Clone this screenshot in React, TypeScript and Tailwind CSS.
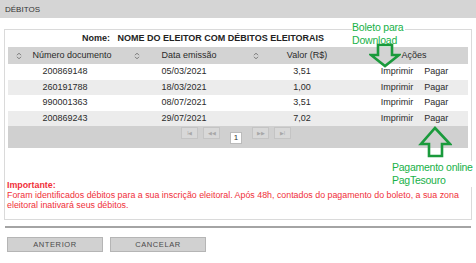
import React from 'react';

const rows = [
  { doc: '200869148', date: '05/03/2021', value: '3,51' },
  { doc: '260191788', date: '18/03/2021', value: '1,00' },
  { doc: '990001363', date: '08/07/2021', value: '3,51' },
  { doc: '200869243', date: '29/07/2021', value: '7,02' },
];

const cols = 'grid grid-cols-[120px_120px_117px_1fr]';

const SortIcon = () => (
  <svg width="6" height="8" viewBox="0 0 6 8" className="shrink-0">
    <path d="M1 3.2 L3 1.2 L5 3.2 M1 4.8 L3 6.8 L5 4.8" fill="none" stroke="#6b6b6b" strokeWidth="0.9" />
  </svg>
);

const PagerButton: React.FC<{ label: string }> = ({ label }) => (
  <div className="w-[17px] h-[12px] border border-[#c4c4c4] bg-[#d8d8d8] text-[5px] leading-[10px] text-center text-[#a8a8a8] tracking-[-0.5px]">
    {label}
  </div>
);

const App: React.FC = () => {
  return (
    <div className="relative w-[476px] h-[263px] overflow-hidden bg-white text-[9px] text-[#2a2a2a] font-['Liberation_Sans',Arial,sans-serif]">
      {/* Title bar */}
      <div className="h-[18px] bg-[#d5d5d5] px-[5px] text-[8px] leading-[19px] text-[#333]">DÉBITOS</div>

      {/* Debits panel */}
      <div className="mt-[11px] mx-[4px] border border-[#dadada] h-[191px]">
        <div className="h-[17px] pl-[77px] leading-[17px] font-bold text-[#222]">
          Nome:&nbsp;&nbsp; NOME DO ELEITOR COM DÉBITOS ELEITORAIS
        </div>

        <div className="mx-[3px]">
          <div className={`${cols} h-[17px] items-center bg-[#d3d3d3]`}>
            <div className="flex items-center pl-[8px] pr-[6px]">
              <SortIcon />
              <span className="flex-1 text-center">Número documento</span>
            </div>
            <div className="flex items-center pl-[6px] pr-[10px]">
              <SortIcon />
              <span className="flex-1 text-center">Data emissão</span>
            </div>
            <div className="flex items-center pl-[5px] pr-[10px]">
              <SortIcon />
              <span className="flex-1 text-center">Valor (R$)</span>
            </div>
            <div className="text-center pr-[5px]">Ações</div>
          </div>

          {rows.map((r, i) => (
            <div
              key={r.doc}
              className={`${cols} h-[15.5px] items-center ${i % 2 === 1 ? 'bg-[#ececec]' : 'bg-white'}`}
            >
              <div className="text-center pr-[6px]">{r.doc}</div>
              <div className="text-center pr-[8px]">{r.date}</div>
              <div className="text-center pr-[9px]">{r.value}</div>
              <div className="flex justify-center gap-[11px] pr-[4px]">
                <span>Imprimir</span>
                <span>Pagar</span>
              </div>
            </div>
          ))}

          {/* Pager */}
          <div className="h-[22px] bg-[#d0d0d0] flex justify-center items-start gap-[5px] pt-[1px] pr-[4px]">
            <PagerButton label="I◀" />
            <PagerButton label="◀◀" />
            <div className="mx-[5px] mt-[5px] w-[12px] h-[12px] bg-white border border-[#bbb] text-[8px] leading-[10px] text-center text-[#333]">1</div>
            <PagerButton label="▶▶" />
            <PagerButton label="▶I" />
          </div>
        </div>

        <div className="mt-[32px] pl-[2px] pr-[4px] text-[8.85px] leading-[10px] text-[#f0303a]">
          <div className="font-bold">Importante:</div>
          <div>
            Foram identificados débitos para a sua inscrição eleitoral. Após 48h, contados do pagamento do boleto, a sua zona eleitoral inativará seus débitos.
          </div>
        </div>
      </div>

      {/* Separator */}
      <div className="mt-[6px] mx-[5px] h-[2px] bg-[#a4a4a4]" />

      {/* Buttons */}
      <div className="flex gap-[7px] mt-[9px] ml-[7px]">
        <button className="w-[96px] h-[15px] bg-[#d1d1d1] border border-[#b5b5b5] text-[7.5px] tracking-[0.6px] text-[#4a4a4a]">ANTERIOR</button>
        <button className="w-[96px] h-[15px] bg-[#d1d1d1] border border-[#b5b5b5] text-[7.5px] tracking-[0.6px] text-[#4a4a4a]">CANCELAR</button>
      </div>

      {/* Annotation: Boleto para Download */}
      <div className="absolute left-[352px] top-[21px] bg-white text-[10.5px] leading-[12.5px] tracking-[-0.2px] text-[#17b148] pr-[1px]">
        <div>Boleto para</div>
        <div>Download</div>
      </div>
      <svg className="absolute left-[369px] top-[43px]" width="32" height="25" viewBox="0 0 32 25">
        <path d="M9 2 H23 V12 H30 L16 23 L2 12 H9 Z" fill="none" stroke="#1a9a3c" strokeWidth="2.6" strokeLinejoin="miter" />
      </svg>

      {/* Annotation: Pagamento online */}
      <svg className="absolute left-[418px] top-[126px]" width="34" height="32" viewBox="0 0 34 32">
        <path d="M17 2 L32 18 H24 V30 H11 V18 H3 Z" fill="none" stroke="#1a9a3c" strokeWidth="2.6" strokeLinejoin="miter" />
      </svg>
      <div className="absolute left-[392px] top-[161px] bg-white text-[10.5px] leading-[13px] tracking-[-0.25px] text-[#17b148]">
        <div>Pagamento online</div>
        <div>PagTesouro</div>
      </div>
    </div>
  );
};

export default App;
